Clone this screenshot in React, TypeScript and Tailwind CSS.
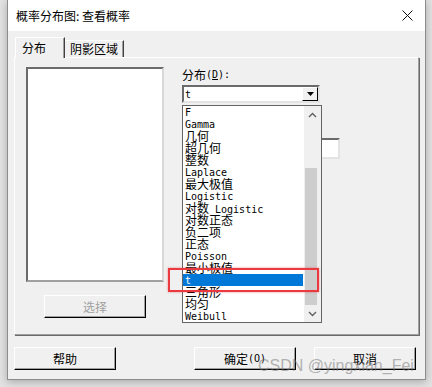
import React from "react";

const CJK = "font-['Noto_Sans_CJK_SC',sans-serif]";
const MONO = "font-['DejaVu_Sans_Mono','Noto_Sans_CJK_SC',monospace]";

const DISTS = [
  "F",
  "Gamma",
  "几何",
  "超几何",
  "整数",
  "Laplace",
  "最大极值",
  "Logistic",
  "对数 Logistic",
  "对数正态",
  "负二项",
  "正态",
  "Poisson",
  "最小极值",
  "t",
  "三角形",
  "均匀",
  "Weibull",
];

// splits a label into CJK / latin runs so latin gets the narrow mono face
function Mixed({ text }: { text: string }) {
  const parts = text.split(/([\u4e00-\u9fff]+)/).filter(Boolean);
  return (
    <>
      {parts.map((p, i) =>
        /[\u4e00-\u9fff]/.test(p) ? (
          <span key={i} className={`${CJK} text-[12px]`}>
            {p}
          </span>
        ) : (
          <span key={i} className={`${MONO} text-[10px] whitespace-pre`}>
            {p}
          </span>
        )
      )}
    </>
  );
}

function Button({
  children,
  disabled,
  className = "",
}: {
  children: React.ReactNode;
  disabled?: boolean;
  className?: string;
}) {
  return (
    <div
      className={`h-[23px] w-[102px] flex items-center justify-center bg-[#f0f0f0] border-t border-l border-white border-r border-b border-r-black border-b-black shadow-[inset_-1px_-1px_0_#a0a0a0] text-[12px] ${CJK} ${
        disabled ? "text-[#a0a0a0]" : "text-black"
      } ${className}`}
    >
      {children}
    </div>
  );
}

function Chevron({ up }: { up?: boolean }) {
  return (
    <svg width="9" height="6" viewBox="0 0 9 6">
      <path
        d={up ? "M1 5 L4.5 1.5 L8 5" : "M1 1 L4.5 4.5 L8 1"}
        fill="none"
        stroke="#606060"
        strokeWidth="1.4"
      />
    </svg>
  );
}

export default function App() {
  return (
    <div className="relative w-[432px] h-[387px] overflow-hidden bg-[#e2e2e2]">
      <div className="ml-[7px] w-[419px] h-[380px] flex flex-col bg-[#f0f0f0] border-x border-b border-[#8c8c8c] shadow-[0_2px_8px_rgba(0,0,0,0.25)]">
        {/* title bar */}
        <div className="h-[31px] shrink-0 bg-white flex items-center justify-between pl-[8px] pr-[12px]">
          <span className={`${CJK} text-[12px] text-black whitespace-pre`}>
            概率分布图: 查看概率
          </span>
          <svg width="11" height="11" viewBox="0 0 11 11" className="mt-[-1px]">
            <path d="M0.5 0.5 L10.5 10.5 M10.5 0.5 L0.5 10.5" stroke="#111" strokeWidth="1" />
          </svg>
        </div>

        <div className="flex-1 flex flex-col pl-[6px] pr-[6px] pt-[6px]">
          {/* tabs */}
          <div className="flex items-end h-[20px] pl-[1px]">
            <div
              className={`relative z-10 h-[21px] mb-[-1px] w-[50px] bg-[#f0f0f0] border-t border-l border-white border-r border-r-[#404040] shadow-[inset_-1px_0_0_#a0a0a0] pl-[6px] pt-[1px] text-[12px] ${CJK} text-black`}
            >
              分布
            </div>
            <div
              className={`h-[17px] w-[59px] border-t border-white border-r border-r-[#404040] shadow-[inset_-1px_0_0_#a0a0a0] pl-[5px] text-[12px] leading-[16px] ${CJK} text-black`}
            >
              阴影区域
            </div>
          </div>

          {/* panel */}
          <div className="h-[278px] w-[405px] flex gap-[18px] pl-[11px] pt-[9px] border-t border-l border-white border-r border-b border-r-[#a0a0a0] border-b-[#a0a0a0] shadow-[1px_1px_0_#696969]">
            <div className="flex flex-col">
              <div className="w-[138px] h-[215px] bg-white border-2 border-[#6b6b6b] border-r-[#d8d8d8] border-b-[#a0a0a0]" />
              <Button disabled className="mt-[13px] ml-[18px]">
                选择
              </Button>
            </div>

            <div className="flex flex-col w-[158px]">
              <div className="h-[16px] leading-[16px] text-black flex items-center">
                <span className={`${CJK} text-[12px]`}>分布</span>
                <span className={`${MONO} text-[10px]`}>
                  (<span className="underline">D</span>):
                </span>
              </div>

              {/* combobox with its list opened */}
              <div className="relative mt-[2px] w-[138px] h-[18px] bg-white border-2 border-[#6b6b6b] border-r-[#e3e3e3] border-b-[#e3e3e3] flex items-center justify-between">
                <span className={`${MONO} text-[10px] pl-[1px] text-black`}>t</span>
                <div className="w-[16px] h-[14px] bg-[#f0f0f0] border-t border-l border-white border-r border-b border-r-black border-b-black flex items-center justify-center">
                  <svg width="7" height="4" viewBox="0 0 7 4">
                    <path d="M0 0 H7 L3.5 4 Z" fill="#000" />
                  </svg>
                </div>

                <div className="absolute z-20 left-[-2px] top-[18px] w-[140px] h-[218px] bg-white border border-[#646464] flex">
                  <div className="w-[121px] flex flex-col">
                    {DISTS.map((d) => (
                      <div
                        key={d}
                        className={`h-[12px] text-[12px] leading-[12px] whitespace-nowrap pl-[2px] w-[120px] ${
                          d === "t" ? "bg-[#0078d7] text-white" : "text-black"
                        }`}
                      >
                        <Mixed text={d} />
                      </div>
                    ))}
                  </div>
                  <div className="w-[17px] flex flex-col bg-[#f0f0f0]">
                    <div className="h-[17px] flex items-center justify-center">
                      <Chevron up />
                    </div>
                    <div className="flex-1 flex flex-col pt-[45px]">
                      <div className="flex-1 ml-[1px] mr-[4px] bg-[#cdcdcd]" />
                    </div>
                    <div className="h-[17px] flex items-center justify-center">
                      <Chevron />
                    </div>
                  </div>
                </div>
              </div>

              <div className="mt-[35px] self-end w-[100px] h-[21px] bg-white border-2 border-[#6b6b6b] border-r-[#e3e3e3] border-b-[#e3e3e3]" />
            </div>
          </div>

          {/* dialog buttons */}
          <div className="flex mt-[12px]">
            <Button>帮助</Button>
            <Button className="ml-[78px]">
              <span>确定</span>
              <span className={`${MONO} text-[10px]`}>(O)</span>
            </Button>
            <Button className="ml-[18px]">取消</Button>
          </div>
        </div>
      </div>

      {/* annotation box */}
      <div className="absolute left-[168px] top-[268px] w-[151px] h-[24px] border-2 border-[#ea3a3f] shadow-[0_0_2px_rgba(234,58,63,0.6)] z-30" />

      {/* watermark */}
      <div className="absolute left-[258px] top-[355px] z-30 font-['Liberation_Sans',sans-serif] text-[16px] leading-[22px] text-[rgba(120,120,120,0.55)] whitespace-pre">
        CSDN @yingxian_Fei
      </div>
    </div>
  );
}
